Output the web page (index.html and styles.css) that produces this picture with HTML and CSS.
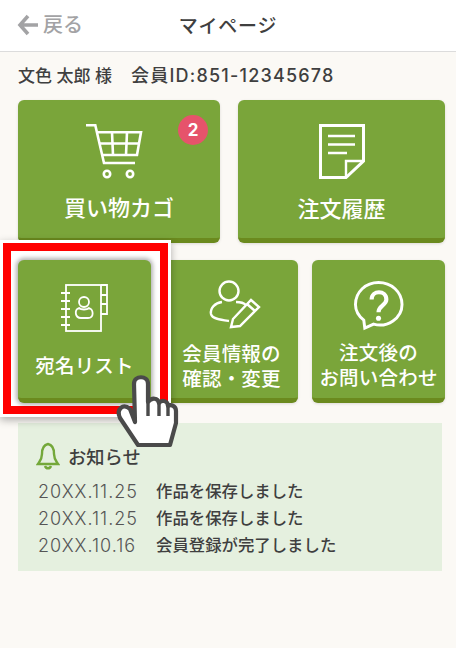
FILE: index.html
```html
<!DOCTYPE html>
<html lang="ja">
<head>
    <meta charset="UTF-8">
    <meta name="viewport" content="width=device-width, initial-scale=1.0">
    <title>マイページ</title>
    <link rel="stylesheet" href="styles.css">
</head>
<body>
    <div class="page">
        <!-- Header -->
        <div class="topbar">
            <div class="back">
                <svg class="back-icon" viewBox="0 0 22 22" width="22" height="22">
                    <path d="M11 2 L3 11 L11 20 M3 11 H21" fill="none" stroke="#a3a3a5" stroke-width="3.6"/>
                </svg>
                <span>戻る</span>
            </div>
            <div class="title">マイページ</div>
        </div>

        <div class="member">文色 太郎 様<span class="member-id">会員ID:851-12345678</span></div>

        <!-- Row 1: large buttons -->
        <div class="row-large">
            <div class="card">
                <span class="badge">2</span>
                <svg class="card-icon cart" viewBox="0 0 56 54" width="56" height="54" fill="none" stroke="#fff" stroke-width="2.6">
                    <path d="M0 1.3 H9.3 L18 39 H49"/>
                    <path d="M11 8.3 H55 L51 31 H15.5"/>
                    <path d="M13 19.5 H53 M26 8.3 L27 31 M41 8.3 L40 31"/>
                    <circle cx="21" cy="50" r="3.2"/>
                    <circle cx="44" cy="50" r="3.2"/>
                </svg>
                <div class="card-label large">買い物カゴ</div>
            </div>
            <div class="card">
                <svg class="card-icon" viewBox="0 0 46 55" width="46" height="55" fill="none" stroke="#fff" stroke-width="3">
                    <path d="M1.5 1.5 H44.5 V37 L27 53.5 H1.5 Z"/>
                    <path d="M27 53.5 V37 H44.5" stroke-width="2.4"/>
                    <path d="M9 12 H36 M9 20.5 H36 M9 29 H28" stroke-width="2.6"/>
                </svg>
                <div class="card-label large">注文履歴</div>
            </div>
        </div>

        <!-- Row 2: small buttons -->
        <div class="row-small">
            <div class="card active">
                <svg class="card-icon" viewBox="0 0 50 50" width="50" height="50" fill="none" stroke="#fff" stroke-width="1.8">
                    <rect x="6" y="1" width="35" height="46"/>
                    <path d="M41 1 H47 V30 H41 M41 11 H47 M41 20 H47"/>
                    <path d="M1 9 H10 M1 17 H10 M1 25 H10 M1 33 H10 M1 41 H10" stroke-width="2"/>
                    <circle cx="24" cy="18" r="5"/>
                    <path d="M19 24 C14 26 15 34 21 34 H28 C34 34 34 26 29 24 C27 26 21 26 19 24 Z"/>
                </svg>
                <div class="card-label single">宛名リスト</div>
            </div>
            <div class="card">
                <svg class="card-icon raised" viewBox="0 0 50 50" width="50" height="50" fill="none" stroke="#fff" stroke-width="2.4">
                    <circle cx="22" cy="10" r="9.5"/>
                    <path d="M15 21 C8 22 3 27 4 33 C5 38 14 39 22 40"/>
                    <path d="M29 21 C33 21 37 22 39 24"/>
                    <path d="M24 46 L26 38 L44 19 L52 26 L33 45 Z M40 23 L48 30"/>
                </svg>
                <div class="card-label">会員情報の<br>確認・変更</div>
            </div>
            <div class="card">
                <svg class="card-icon raised" viewBox="0 0 50 50" width="49" height="49" fill="none" stroke="#fff" stroke-width="3">
                    <path d="M10 40 L11 48 L20 44 C34 48 49 38 49 24 C49 11 38 1.5 25 1.5 C12 1.5 1.5 11 1.5 24 C1.5 30 5 36 10 40 Z"/>
                    <path d="M18 19 C18 9 33 9 33 19 C33 25 25 25 25 32" stroke-width="4.2"/>
                    <circle cx="25" cy="38" r="2.6" fill="#fff" stroke="none"/>
                </svg>
                <div class="card-label">注文後の<br>お問い合わせ</div>
            </div>
        </div>

        <!-- Notices -->
        <div class="notice">
            <div class="notice-head">
                <svg viewBox="0 0 24 28" width="24" height="28" fill="none" stroke="#74a83a" stroke-width="2.4">
                    <path d="M12 2 C7 3 6 7 6 12 C6 17 4 19 2 22 H22 C20 19 18 17 18 12 C18 7 17 3 12 2 Z"/>
                    <path d="M9 24 C10 27 14 27 15 24"/>
                </svg>
                <span>お知らせ</span>
            </div>
            <div class="notice-row"><span class="date">20XX.11.25</span><span>作品を保存しました</span></div>
            <div class="notice-row"><span class="date">20XX.11.25</span><span>作品を保存しました</span></div>
            <div class="notice-row"><span class="date">20XX.10.16</span><span>会員登録が完了しました</span></div>
        </div>

        <!-- Highlight frame and pointer over the page -->
        <div class="highlight"></div>
        <svg class="hand" viewBox="0 0 62 72" width="62" height="72">
            <path d="M18 46 L17 8 C17 -1 31 -1 31 8 L31 26 C35 21 41 22 42 27 C45 23 51 25 51 30 C54 28 59 30 59 35 L59 47 L53 69 H21 L3 42 C-1 33 6 27 13 33 Z" fill="#fff" stroke="#4a4a4a" stroke-width="4.2" stroke-linejoin="round"/>
            <path d="M31 26 V40 M42 27 V40 M51 30 V40" fill="none" stroke="#4a4a4a" stroke-width="3.4"/>
        </svg>
    </div>
</body>
</html>
```

FILE: styles.css
```css
* {
    box-sizing: border-box;
}
body {
    margin: 0;
    background-color: #fbf9f5;
    color: #3f3f3f;
    font-family: Inter, "Noto Sans CJK JP", sans-serif;
}
.page {
    position: relative;
    width: 456px;
    height: 648px;
    overflow: hidden;
}
.topbar {
    position: relative;
    display: flex;
    justify-content: center;
    align-items: center;
    height: 52px;
    padding-bottom: 3px;
    background-color: #fff;
    border-bottom: 1px solid #dcdcdc;
}
.title {
    font-size: 19px;
    font-weight: 500;
    letter-spacing: 0.8px;
}
.back {
    position: absolute;
    left: 17px;
    top: 14px;
    display: flex;
    align-items: center;
    gap: 4px;
    color: #a3a3a5;
    font-size: 20px;
    font-weight: 500;
    line-height: 22px;
}
.member {
    padding: 12px 18px 0;
    height: 48px;
    font-size: 17px;
    font-weight: 500;
    line-height: 24px;
}
.member-id {
    margin-left: 19px;
    font-size: 18px;
    letter-spacing: 1.2px;
}
.row-large {
    display: grid;
    grid-template-columns: 202px 207px;
    gap: 18px;
    padding-left: 18px;
    margin-bottom: 17px;
}
.row-small {
    display: grid;
    grid-template-columns: 133px 133px 133px;
    gap: 14px;
    padding-left: 18px;
    margin-bottom: 20px;
}
.card {
    position: relative;
    display: flex;
    flex-direction: column;
    align-items: center;
    height: 143px;
    padding-top: 24px;
    background-color: #7aa53a;
    border-bottom: 5px solid #6b8a1e;
    border-radius: 6px;
    color: #fff;
    box-shadow: 0 1px 3px rgba(0, 0, 0, 0.12);
}
.card.active {
    z-index: 2;
    box-shadow: 0 0 4px 2px rgba(0, 0, 0, 0.3);
}
.card-icon {
    flex-shrink: 0;
    overflow: visible;
}
.card-icon.cart {
    margin-right: 10px;
}
.card-icon.raised {
    margin-top: -3px;
    margin-bottom: 4px;
}
.card-label {
    margin-top: 7px;
    font-size: 19.5px;
    font-weight: 500;
    line-height: 25px;
    text-align: center;
    letter-spacing: 0.2px;
}
.card-label.single {
    margin-top: 20px;
}
.card-label.large {
    margin-top: 15px;
    font-size: 22px;
    line-height: 30px;
    letter-spacing: 0;
}
.badge {
    position: absolute;
    top: 15px;
    left: 160px;
    width: 30px;
    height: 30px;
    border-radius: 50%;
    background-color: #e6536b;
    font-size: 17px;
    font-weight: 700;
    line-height: 30px;
    text-align: center;
}
.notice {
    width: 424px;
    height: 148px;
    margin-left: 18px;
    padding: 19px 20px 0;
    background-color: #e5f0df;
}
.notice-head {
    display: flex;
    align-items: center;
    gap: 8px;
    margin-bottom: 8px;
    margin-left: -2px;
    font-size: 18.25px;
    font-weight: 500;
}
.notice-row {
    display: flex;
    font-size: 16.4px;
    font-weight: 500;
    line-height: 27px;
}
.date {
    width: 118px;
    font-size: 18px;
    font-weight: 300;
    letter-spacing: 1px;
    color: #555;
}
.highlight {
    position: absolute;
    z-index: 1;
    left: 3px;
    top: 243px;
    width: 165px;
    height: 171px;
    background-color: #fff;
    border: 8px solid #f00;
    box-shadow: 0 0 0 3px #fff, 0 3px 8px 3px rgba(0, 0, 0, 0.3);
}
.hand {
    position: absolute;
    z-index: 3;
    left: 117px;
    top: 376px;
    overflow: visible;
}
```
